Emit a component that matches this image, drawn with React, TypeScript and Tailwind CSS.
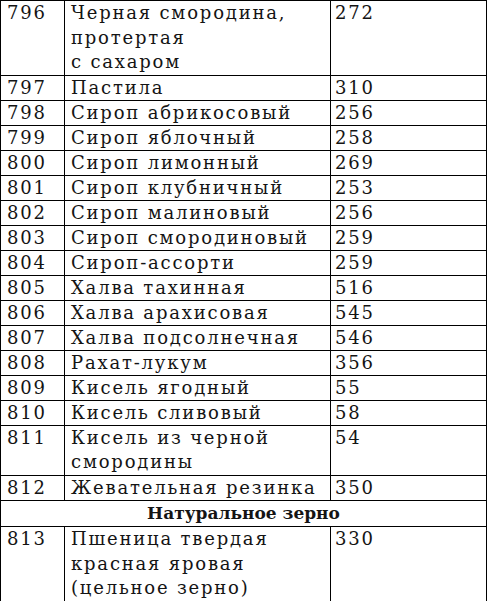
const rows: { n: string; name: string[]; kcal: string }[] = [
  { n: "796", name: ["Черная смородина,", "протертая", "с сахаром"], kcal: "272" },
  { n: "797", name: ["Пастила"], kcal: "310" },
  { n: "798", name: ["Сироп абрикосовый"], kcal: "256" },
  { n: "799", name: ["Сироп яблочный"], kcal: "258" },
  { n: "800", name: ["Сироп лимонный"], kcal: "269" },
  { n: "801", name: ["Сироп клубничный"], kcal: "253" },
  { n: "802", name: ["Сироп малиновый"], kcal: "256" },
  { n: "803", name: ["Сироп смородиновый"], kcal: "259" },
  { n: "804", name: ["Сироп-ассорти"], kcal: "259" },
  { n: "805", name: ["Халва тахинная"], kcal: "516" },
  { n: "806", name: ["Халва арахисовая"], kcal: "545" },
  { n: "807", name: ["Халва подсолнечная"], kcal: "546" },
  { n: "808", name: ["Рахат-лукум"], kcal: "356" },
  { n: "809", name: ["Кисель ягодный"], kcal: "55" },
  { n: "810", name: ["Кисель сливовый"], kcal: "58" },
  { n: "811", name: ["Кисель из черной", "смородины"], kcal: "54" },
  { n: "812", name: ["Жевательная резинка"], kcal: "350" },
];

const grain = { n: "813", name: ["Пшеница твердая", "красная яровая", "(цельное зерно)"], kcal: "330" };

const Row = ({ r, last }: { r: { n: string; name: string[]; kcal: string }; last?: boolean }) => {
  const lead = r.name.length > 1 ? "leading-[24.6px]" : "leading-[24px]";
  return (
    <div className={`grid grid-cols-[64px_266px_1fr] ${last ? "" : "border-b border-black"} ${lead}`}>
      <div className="pl-[6px] border-r border-black">{r.n}</div>
      <div className="pl-[6px] border-r border-black">
        {r.name.map((l) => (
          <div key={l}>{l}</div>
        ))}
      </div>
      <div className="pl-[4px]">{r.kcal}</div>
    </div>
  );
};

export default function App() {
  return (
    <div className="w-[487px] h-[601px] bg-white overflow-hidden">
      <div
        className="w-[487px] border border-black text-[#141414] text-[18px] tracking-[1.8px]"
        style={{ fontFamily: '"DejaVu Serif", serif' }}
      >
        {rows.map((r) => (
          <Row key={r.n} r={r} />
        ))}
        <div className="border-b border-black leading-[25px] text-center font-bold text-[17px] tracking-normal">
          Натуральное зерно
        </div>
        <Row r={grain} last />
      </div>
    </div>
  );
}
